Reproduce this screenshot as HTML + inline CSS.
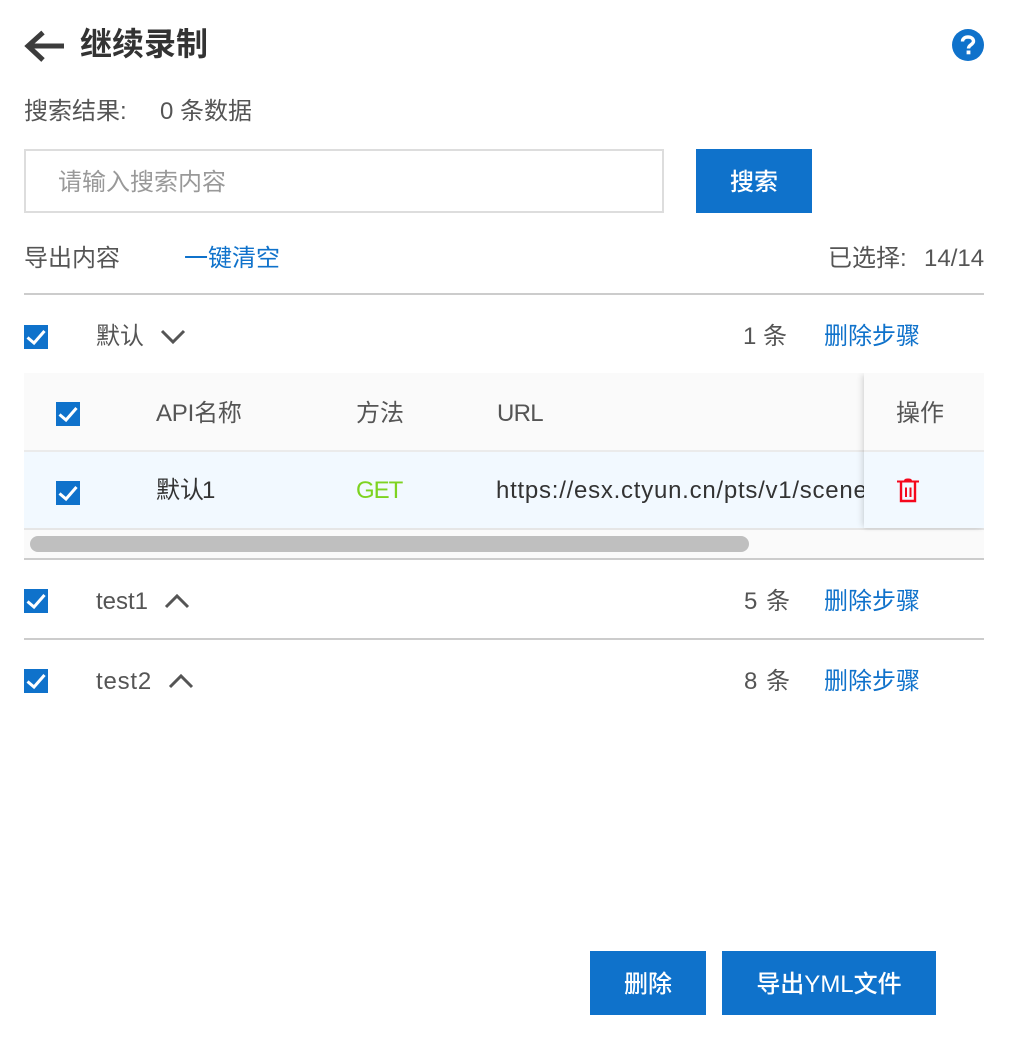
<!DOCTYPE html>
<html lang="zh">
<head>
<meta charset="utf-8">
<style>
html,body{margin:0;padding:0;background:#fff;}
body{width:1012px;height:1044px;position:relative;overflow:hidden;font-family:"Liberation Sans","Noto Sans CJK SC",sans-serif;font-size:24px;color:#555;}
.t{position:absolute;white-space:nowrap;line-height:32px;height:32px;}
.b{position:absolute;background:#0f72cb;color:#fff;text-align:center;font-weight:500;height:64px;line-height:68px;}
.l{position:absolute;left:24px;width:960px;height:2px;background:#ccc;}
.link{color:#0f72cb;}
.c{position:absolute;width:24px;height:24px;background:#0f72cb;}
.c svg{display:block;}
</style>
</head>
<body>
<svg style="position:absolute;left:20px;top:26px" width="48" height="40" viewBox="0 0 48 40"><path d="M44 20H8M23 6.500L8 20L23 34" fill="none" stroke="#3c3c3c" stroke-width="5"/></svg>
<div class="t" style="left:80px;top:27px;font-size:32px;font-weight:700;color:#333;line-height:34px;height:34px;">继续录制</div>
<svg style="position:absolute;left:952px;top:29px" width="32" height="32" viewBox="0 0 32 32"><circle cx="16" cy="16" r="16" fill="#0f72cb"/><path d="M10.500 12.500C10.500 9.500 13 8 16 8C19 8 21.500 9.600 21.500 12.300C21.500 15.800 16.500 15.600 16.500 19.500" fill="none" stroke="#fff" stroke-width="3.400"/><rect x="14.600" y="21.500" width="3.800" height="3.800" fill="#fff"/></svg>

<div class="t" style="left:24px;top:96px;">搜索结果:</div>
<div class="t" style="left:160px;top:96px;">0 条数据</div>

<div style="position:absolute;left:24px;top:149px;width:636px;height:60px;border:2px solid #ddd;background:#fff;"></div>
<div class="t" style="left:58px;top:167px;color:#999;">请输入搜索内容</div>
<div class="b" style="left:696px;top:149px;width:116px;">搜索</div>

<div class="t" style="left:24px;top:243px;">导出内容</div>
<div class="t link" style="left:184px;top:243px;">一键清空</div>
<div class="t" style="left:828px;top:243px;">已选择:</div>
<div class="t" style="left:924px;top:243px;">14/14</div>

<div class="l" style="top:293px;"></div>

<div class="c" style="left:24px;top:325px;"><svg width="24" height="24" viewBox="0 0 24 24"><path d="M3.500 12.500L10 18L20.500 6" fill="none" stroke="#fff" stroke-width="3"/></svg></div>
<div class="t" style="left:96px;top:321px;">默认</div>
<svg style="position:absolute;left:160px;top:328px" width="26" height="18" viewBox="0 0 26 18"><path d="M2 3L13 14L24 3" fill="none" stroke="#555" stroke-width="3"/></svg>
<div class="t" style="left:743px;top:321px;">1 条</div>
<div class="t link" style="left:824px;top:321px;">删除步骤</div>

<div style="position:absolute;left:24px;top:373px;width:960px;height:185px;background:#fafafa;"></div>
<div style="position:absolute;left:24px;top:450px;width:960px;height:2px;background:#ebebeb;"></div>
<div style="position:absolute;left:24px;top:452px;width:960px;height:76px;background:#f2f9ff;"></div>
<div style="position:absolute;left:24px;top:528px;width:960px;height:2px;background:#e6e6e6;"></div>

<div class="c" style="left:56px;top:402px;"><svg width="24" height="24" viewBox="0 0 24 24"><path d="M3.500 12.500L10 18L20.500 6" fill="none" stroke="#fff" stroke-width="3"/></svg></div>
<div class="t" style="left:156px;top:398px;letter-spacing:-.2px;">API名称</div>
<div class="t" style="left:356px;top:398px;">方法</div>
<div class="t" style="left:497px;top:398px;letter-spacing:-.7px;">URL</div>

<div class="c" style="left:56px;top:481px;"><svg width="24" height="24" viewBox="0 0 24 24"><path d="M3.500 12.500L10 18L20.500 6" fill="none" stroke="#fff" stroke-width="3"/></svg></div>
<div class="t" style="left:156px;top:475px;color:#333;">默认<span style="margin-left:-2px;">1</span></div>
<div class="t" style="left:356px;top:475px;color:#7ed321;letter-spacing:-1px;">GET</div>
<div style="position:absolute;left:496px;top:475px;width:368px;height:32px;overflow:hidden;"><div class="t" style="left:0;top:0;color:#333;letter-spacing:.75px;">https://esx.ctyun.cn/pts/v1/scene/list</div></div>

<div style="position:absolute;left:844px;top:373px;width:140px;height:165px;overflow:hidden;">
<div style="position:absolute;left:20px;top:0;width:120px;height:155px;background:#fafafa;box-shadow:-4px 0 6px -2px rgba(0,0,0,.13),0 2px 4px -1px rgba(0,0,0,.08);"></div>
<div style="position:absolute;left:20px;top:77px;width:120px;height:2px;background:#ebebeb;"></div>
<div style="position:absolute;left:20px;top:79px;width:120px;height:76px;background:#f2f9ff;"></div>
</div>
<div class="t" style="left:896px;top:398px;">操作</div>
<svg style="position:absolute;left:896px;top:477px" width="24" height="26" viewBox="0 0 24 26"><path d="M1 4.500H23" stroke="#f5071c" stroke-width="2" fill="none"/><path d="M8 4C8 2 9.500 1.500 12 1.500C14.500 1.500 16 2 16 4Z" fill="#f5071c"/><path d="M5 5V24H19V5" stroke="#f5071c" stroke-width="2.400" fill="none"/><path d="M10 10.500V20M14.500 10.500V20" stroke="#f5071c" stroke-width="2" fill="none"/></svg>

<div style="position:absolute;left:30px;top:536px;width:719px;height:16px;border-radius:8px;background:#bfbfbf;"></div>

<div class="l" style="top:558px;"></div>

<div class="c" style="left:24px;top:589px;"><svg width="24" height="24" viewBox="0 0 24 24"><path d="M3.500 12.500L10 18L20.500 6" fill="none" stroke="#fff" stroke-width="3"/></svg></div>
<div class="t" style="left:96px;top:586px;">test1</div>
<svg style="position:absolute;left:164px;top:592px" width="26" height="18" viewBox="0 0 26 18"><path d="M2 15L13 4L24 15" fill="none" stroke="#555" stroke-width="3"/></svg>
<div class="t" style="left:744px;top:586px;word-spacing:2px;">5 条</div>
<div class="t link" style="left:824px;top:586px;">删除步骤</div>

<div class="l" style="top:638px;"></div>

<div class="c" style="left:24px;top:669px;"><svg width="24" height="24" viewBox="0 0 24 24"><path d="M3.500 12.500L10 18L20.500 6" fill="none" stroke="#fff" stroke-width="3"/></svg></div>
<div class="t" style="left:96px;top:666px;letter-spacing:.8px;">test2</div>
<svg style="position:absolute;left:168px;top:672px" width="26" height="18" viewBox="0 0 26 18"><path d="M2 15L13 4L24 15" fill="none" stroke="#555" stroke-width="3"/></svg>
<div class="t" style="left:744px;top:666px;word-spacing:2px;">8 条</div>
<div class="t link" style="left:824px;top:666px;">删除步骤</div>

<div class="b" style="left:590px;top:951px;width:116px;">删除</div>
<div class="b" style="left:722px;top:951px;width:214px;">导出YML文件</div>
</body>
</html>
